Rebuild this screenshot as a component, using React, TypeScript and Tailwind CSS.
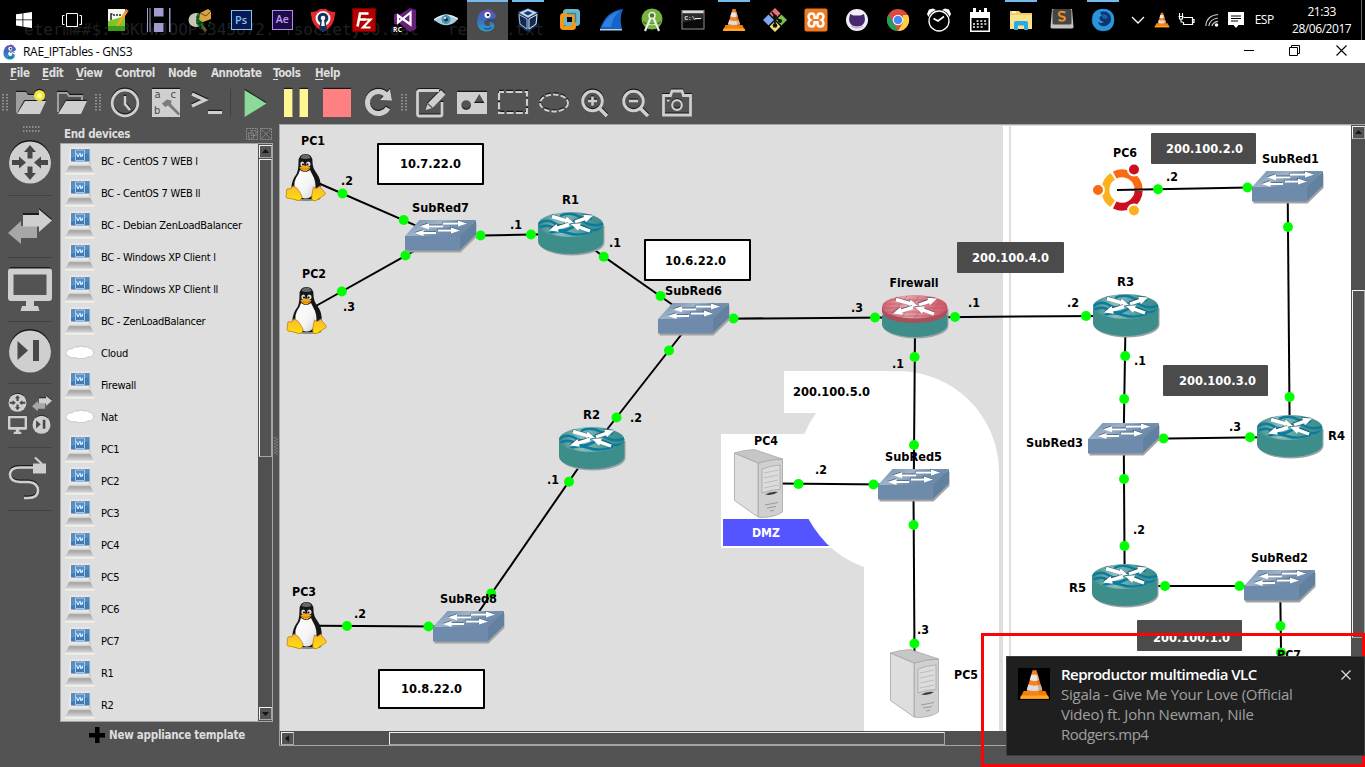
import React from "react";

type P = { children?: React.ReactNode };

const UI = "font-['DejaVu_Sans_Condensed','DejaVu_Sans',sans-serif]";
const SEGOE = "font-['Open_Sans','Noto_Sans',sans-serif]";

/* ---------- Taskbar ---------- */

function Ico({ children, vb = "0 0 24 24", s = 24 }: P & { vb?: string; s?: number }) {
  return (
    <svg width={s} height={s} viewBox={vb} className="block shrink-0">
      {children}
    </svg>
  );
}

function Cone() {
  return (
    <>
      <path d="M3.500 17h17l2.500 6H1z" fill="#f57c00" />
      <path d="M1.500 20.500h21l.8 2.500H.8z" fill="#ffa726" />
      <path d="M10.500 1h3l5 17.500q-6.500 3-13 0z" fill="#f58220" />
      <path d="M9.500 4.500h5l1.200 4q-3.700 1.600-7.400 0z" fill="#e8e8e8" />
      <path d="M7.200 12q4.800 1.800 9.600 0l1.200 4q-6 2.200-12 0z" fill="#dcdcdc" />
      <path d="M13 1l.8 0 4.700 17-3 1.200z" fill="#c45500" opacity=".35" />
    </>
  );
}

function Gecko({ id }: { id: string }) {
  return (
    <>
      <defs>
        <linearGradient id={id} x1="0" y1="0" x2="0" y2="1">
          <stop offset="0" stopColor="#6b4bb0" />
          <stop offset=".45" stopColor="#3f68c0" />
          <stop offset="1" stopColor="#2aa3c4" />
        </linearGradient>
      </defs>
      <path
        d="M3 9Q5 2 11 2l2.500-1.500L15 2l2-.5.3 2Q21 5 21 9q-2 2.500-6 2.200-4.500-.2-5.500 2Q8.500 16 11 17.500q2.500 1 4-.5.500-1.500-1-2 2-1.800 4 0 2.500 2.500.5 5.500-2.500 3-7 3Q4 23 2.500 17q-.5-2 0-3.500Q1.500 12 3 9z"
        fill={`url(#${id})`}
      />
      <path d="M12 13q3-2.500 7-.5M9 20q4 2.500 7.500-.5" fill="none" stroke="#1c4d96" strokeWidth="1.200" />
      <circle cx="12.500" cy="7" r="3" fill="#fff" />
      <circle cx="13" cy="7" r="1.300" fill="#223" />
    </>
  );
}

const apps: { icon: React.ReactNode; cls?: string; bar?: string }[] = [
  {
    icon: (
      <Ico>
        <rect x="2" y="1" width="17" height="22" fill="#f4f8ee" />
        <path d="M2 13l17-5v15H2z" fill="#7bc62d" />
        <path d="M2 18h17v5H2z" fill="#3f9a1c" />
        <path d="M5 12V6h1.500M8 6v2M11 6v2M14 6v2" stroke="#223" strokeWidth="1.500" fill="none" />
        <path d="M20 1l2.500 1.800L13.500 17l-2.500 1.500.3-3z" fill="#f5a623" />
        <path d="M19 3l2.300 1.600L22.500 2.800 20.200 1z" fill="#d66" />
      </Ico>
    ),
  },
  {
    icon: (
      <Ico>
        <path d="M0 0h1v24H0zM22 0h1.500v24H22zM2.500 0h1v24h-1z" fill="#a09cce" />
        <path d="M7 0h9.500v8.500H7zM7 15h9.500v9H7z" fill="#a09cce" />
      </Ico>
    ),
  },
  {
    icon: (
      <Ico>
        <ellipse cx="8" cy="12" rx="7.500" ry="7" fill="#c9c5b8" />
        <path d="M9 6h6v12h-5q-3-3-1-12z" fill="#087a24" />
        <path d="M8 9h7M8 12h7M8 15h7M12 6v12" stroke="#03280d" strokeWidth=".8" />
        <path d="M12 5l8-4 3 2v8l-8 3-4-2z" fill="#d9a441" />
        <path d="M12 5l6 3 5-5" stroke="#6f4708" fill="none" />
        <path d="M14 18l4 5" stroke="#655a36" strokeWidth="3" />
        <path d="M21 15l2-1M20 18h2" stroke="#087a24" />
      </Ico>
    ),
  },
  {
    icon: (
      <div className="flex h-5 w-[21px] items-center justify-center border border-[#86c5f5] bg-[#071a52] font-['Open_Sans',sans-serif] text-[11px] font-semibold text-[#86c5f5]">
        Ps
      </div>
    ),
  },
  {
    icon: (
      <div className="flex h-5 w-[21px] items-center justify-center border border-[#b18cf0] bg-[#1d0b44] font-['Open_Sans',sans-serif] text-[10.500px] font-semibold text-[#c49bfa]">
        Ae
      </div>
    ),
  },
  {
    icon: (
      <Ico>
        <path d="M0 4q6 0 9-3h6q3 3 9 3 .5 14-12 20Q-.5 18 0 4z" fill="#e8272c" />
        <circle cx="12" cy="10.500" r="7.500" fill="#f3f3f3" />
        <circle cx="12" cy="10" r="5.300" fill="#12315f" />
        <circle cx="12" cy="10" r="2.300" fill="#f3f3f3" />
        <path d="M9.500 13l5 0 1.500 9-4 2-4-2z" fill="#12315f" />
        <path d="M11 11h2l.8 7h-3.600z" fill="#f3f3f3" />
      </Ico>
    ),
  },
  {
    icon: (
      <Ico>
        <rect x=".5" y=".5" width="23" height="23" fill="#b40000" stroke="#7d0000" strokeDasharray="1.500 1" />
        <path d="M5.500 18.500L8 5.500h8.500M7 11.500h6.500" fill="none" stroke="#fff" strokeWidth="2.600" />
        <path d="M11.500 11.500h7l-7.500 8h7.500" fill="none" stroke="#fff" strokeWidth="2.200" />
      </Ico>
    ),
  },
  {
    icon: (
      <Ico>
        <path d="M17 0l6 2v19l-6 3L6 15l-3 1.500-2-1V6.500l2-1L6 7z" fill="#68217a" />
        <path d="M17.500 4.500L5 14.500v-7l12.500 9z" fill="none" stroke="#fff" strokeWidth="2.200" />
        <text x="0" y="23.500" fontSize="6.500" fontWeight="700" fill="#fff" fontFamily="Open Sans" textLength="9">
          RC
        </text>
      </Ico>
    ),
  },
  {
    icon: (
      <Ico>
        <path d="M0 12Q12 1.500 24 11q-10 12-24 1z" fill="#a9cbdb" />
        <path d="M0 12Q12 3 24 11" fill="none" stroke="#dceef6" strokeWidth="1.500" />
        <circle cx="12" cy="11.500" r="4.500" fill="#4b93b5" />
        <circle cx="12" cy="11.500" r="1.900" fill="#12364a" />
        <circle cx="11" cy="10" r="1.100" fill="#fff" />
      </Ico>
    ),
  },
  { icon: <Ico><Gecko id="gk1" /></Ico>, cls: "bg-[#4c4c4c]", bar: "w-full" },
  {
    icon: (
      <Ico>
        <path d="M12 0l10 4-1 14-9 6-9-6L2 4z" fill="#1b3a6b" />
        <path d="M12 .8l9 4-9 5-9-5z" fill="#c6d5ea" />
        <path d="M12 3l4.500 2L12 7.500 7.500 5z" fill="#1b3a6b" />
        <path d="M3 6.500l8 4.500v10l-7-5z" fill="#14294d" stroke="#a9bedb" />
        <path d="M21 6.500L13 11v10l7-5z" fill="#14294d" stroke="#dfe9f5" />
      </Ico>
    ),
    bar: "w-8",
  },
  {
    icon: (
      <Ico>
        <rect x="7" y="3" width="13" height="13" rx="1.500" fill="none" stroke="#6ab8cc" strokeWidth="4" />
        <rect x="4" y="7" width="12" height="13" rx="1.500" fill="none" stroke="#f3961c" strokeWidth="4" />
        <path d="M9 5.500h8.500v9" fill="none" stroke="#2f8aa8" strokeWidth="1.500" />
      </Ico>
    ),
  },
  {
    icon: (
      <Ico>
        <path d="M1 21Q7 3 24 1q-4 9-1 20z" fill="#1463c8" />
        <path d="M3 19Q9 5 22 2.500 14 7 12 19z" fill="#3f8be8" opacity=".7" />
        <path d="M1 21h22v1.500H1z" fill="#b9cbe0" />
      </Ico>
    ),
  },
  {
    icon: (
      <Ico>
        <circle cx="12" cy="11" r="10.500" fill="#78b240" />
        <path d="M3 14q9 5 18 0" stroke="#4d7c24" strokeWidth="1.500" fill="none" />
        <path d="M10.500 10L5 23M13.500 10L19 23" stroke="#e9efe4" strokeWidth="2.200" />
        <circle cx="12" cy="7.500" r="3" fill="#4d7c24" stroke="#e9efe4" strokeWidth="1.500" />
        <path d="M8 16q4 2 8 0" stroke="#e9efe4" fill="none" />
      </Ico>
    ),
  },
  {
    icon: (
      <Ico>
        <rect x="1" y="2.500" width="22" height="18.500" fill="#0a0a0a" stroke="#8f8f8f" />
        <path d="M1.500 3h21v2.500h-21z" fill="#dcdcdc" />
        <path d="M2 5.500h20V11L2 14z" fill="#2c2c2c" />
        <text x="3.500" y="11.500" fontSize="6" fontWeight="700" fill="#eee" fontFamily="Liberation Mono">
          C:\
        </text>
        <path d="M14 10.500h6" stroke="#eee" />
      </Ico>
    ),
  },
  { icon: <Ico><Cone /></Ico>, bar: "w-8" },
  {
    icon: (
      <Ico>
        <path d="M12 0l5.500 5.500L12 11 6.500 5.500z" fill="#e87272" />
        <path d="M5.500 6.500L11 12l-5.500 5.500L0 12z" fill="#7aa9f0" />
        <path d="M18.500 6.500L24 12l-5.500 5.500L13 12z" fill="#7fc04a" />
        <path d="M12 13l5.500 5.500L12 24l-5.500-5.500z" fill="#f3df78" />
        <path d="M9 4l3 4v10M12 9l5 4" stroke="#111" strokeWidth="1.700" fill="none" />
        <circle cx="12" cy="17.500" r="2.300" fill="#111" />
        <circle cx="17" cy="13" r="2" fill="#111" />
        <circle cx="12" cy="8.500" r="2" fill="#111" />
      </Ico>
    ),
  },
  {
    icon: (
      <Ico>
        <rect x=".5" y=".5" width="23" height="23" rx="2" fill="#ee7a22" />
        <path
          d="M8 5.500q-3.500 0-3.500 3.300 0 2 2 3.200-2 1.200-2 3.200Q4.500 18.500 8 18.500q2.500 0 2.500-3.300v-1h3v1q0 3.300 2.500 3.300 3.500 0 3.500-3.300 0-2-2-3.200 2-1.200 2-3.200 0-3.300-3.500-3.300-2.500 0-2.500 3.300v1h-3v-1q0-3.300-2.500-3.300z"
          fill="none"
          stroke="#fff"
          strokeWidth="2.400"
        />
      </Ico>
    ),
  },
  {
    icon: (
      <Ico>
        <circle cx="12" cy="12" r="11" fill="#f1eef7" />
        <path d="M5 6l3.500 1.500h7L19 6q1.500 5 .5 8-2 4.500-7.500 4.500T4.500 14Q3.500 11 5 6z" fill="#46296f" />
        <path d="M6 18q6 4 12 0" stroke="#b9aecf" fill="none" strokeWidth="1.500" />
      </Ico>
    ),
  },
  {
    icon: (
      <Ico>
        <circle cx="12" cy="12" r="11" fill="#dd4b3e" />
        <path d="M2.500 6.500L8 16l4 7A11 11 0 0 1 2.500 6.500z" fill="#1da05c" />
        <path d="M12 23l5-8.500V7h5a11 11 0 0 1-10 16z" fill="#fecf41" />
        <circle cx="12" cy="12" r="5.300" fill="#fff" />
        <circle cx="12" cy="12" r="4.300" fill="#4a8af4" />
      </Ico>
    ),
  },
  {
    icon: (
      <Ico>
        <path d="M0 6l2-4.500 4-1L9 2Q3 4 1.500 9zM24 6l-2-4.500-4-1L15 2q6 2 7.500 7z" fill="#fff" />
        <circle cx="12" cy="13" r="10" fill="none" stroke="#fff" strokeWidth="1.300" />
        <path d="M6.500 10.500L11 13l6-4.500" fill="none" stroke="#fff" strokeWidth="1.700" />
      </Ico>
    ),
  },
  {
    icon: (
      <Ico>
        <path d="M2 4h3V0h3v4h3V2h2v2h3V0h3v4h3v20H2z" fill="#fff" />
        <path d="M3.500 10h17V22.500h-17z" fill="#000" />
        <path d="M8.500 13h10.500M5 16h14M5 19h10" stroke="#fff" strokeWidth="1.600" strokeDasharray="2 1.800" />
      </Ico>
    ),
  },
  {
    icon: (
      <Ico>
        <path d="M1 3h9l2 2h11v16H1z" fill="#f2cf63" />
        <path d="M1 7h22v14H1z" fill="#fbe38c" />
        <path d="M5 22v-7q0-2 2-2h10q2 0 2 2v7h-4v-4.500H9V22z" fill="#29a9e5" />
        <path d="M3 3.500h4v1.500H3z" fill="#fff" />
      </Ico>
    ),
    bar: "w-8",
  },
  {
    icon: (
      <Ico>
        <path d="M2 1h20l1.500 18q0 1.500-2 1.500h-19Q.5 20.500.500 19z" fill="#c4c4c4" />
        <rect x="2.500" y="1" width="19" height="15.500" rx="1.500" fill="#454545" />
        <path d="M15.500 4.500Q9 2.500 9 6q0 2 3 2.500t3 2q-.5 3.500-6.500 1.500" stroke="#ef8f30" strokeWidth="2" fill="none" />
      </Ico>
    ),
  },
  {
    icon: (
      <Ico>
        <circle cx="12" cy="12" r="11.200" fill="#1572b8" />
        <path d="M2 6q4-5 10-5 9 0 11 8 1 9-5 13Q5 25 1.500 15z" fill="#2c94d8" />
        <path d="M9 4q8-2 10.500 4t-4.500 10q-7 1-8-4 3 2 6 0-4-1-4.500-3.500t2.500-2.500q-1-2-2-4z" fill="#0b3570" />
        <path d="M12 6q4 0 5 4l-3 1q-2 0-3-2z" fill="#1b5fa8" />
      </Ico>
    ),
    bar: "w-8",
  },
];

function Taskbar() {
  return (
    <div className="relative flex h-10 shrink-0 items-stretch bg-black">
      <div className="absolute left-6 top-[20px] whitespace-pre font-['DejaVu_Sans_Mono',monospace] text-[16px] leading-[20px] text-[#1d2024]">
        {"eterm##$: BKUWJOOPS345672. fsociety00.dat   readme.txt"}
      </div>
      <div className="relative flex w-12 items-center justify-center">
        <svg width="16" height="16" viewBox="0 0 16 16">
          <path d="M0 2.300L6.500 1.400v6.100H0zM7.300 1.300L16 0v7.500H7.300zM0 8.300h6.500v6.200L0 13.600zM7.300 8.300H16V16l-8.700-1.300z" fill="#fff" />
        </svg>
      </div>
      <div className="relative flex w-[49.5px] items-center pl-[14px]">
        <svg width="20" height="14" viewBox="0 0 20 14" fill="none" stroke="#fff">
          <path d="M4.500.5h11v13h-11zM2.500 2.500h-2v9h2M17.500 2.500h2v9h-2" />
        </svg>
      </div>
      {apps.map((a, i) => (
        <div key={i} className={`relative flex w-[41.06px] shrink-0 items-center justify-center ${a.cls ?? ""}`}>
          {a.bar && <div className={`absolute top-0 h-0.5 bg-[#76b9ed] ${a.bar}`} />}
          {a.icon}
        </div>
      ))}
      <div className="flex flex-1 items-center pl-[7px]">
        <svg width="14" height="8" viewBox="0 0 14 8" className="shrink-0">
          <path d="M1 1l6 6 6-6" fill="none" stroke="#fff" strokeWidth="1.300" />
        </svg>
        <div className="ml-[9px]">
          <Ico s={16}><Cone /></Ico>
        </div>
        <svg width="17" height="14" viewBox="0 0 17 14" className="ml-2 shrink-0">
          <path d="M5.500 4.500h9v7h-9V9M14.500 6.500h1.500v3h-1.500" fill="none" stroke="#fff" strokeWidth="1.200" />
          <path d="M1.500 0v3M4.500 0v3M.5 3.500h5M1.500 3.500v2.500h3V3.500M3 6v3h2" fill="none" stroke="#fff" strokeWidth="1.100" />
        </svg>
        <svg width="14" height="14" viewBox="0 0 14 14" className="ml-[10px] shrink-0">
          <g fill="none" stroke="#c9c9c9" strokeWidth="1.200">
            <path d="M.8 13Q1.500 2.500 13 1.500M3.800 13Q5 6 13 5M6.800 13Q8 9 13 8.300" />
          </g>
          <circle cx="11.500" cy="12" r="1.800" fill="#fff" />
        </svg>
        <svg width="16" height="16" viewBox="0 0 16 16" className="ml-[9px] shrink-0">
          <path d="M0 0h16v13h-5.500L8 16l-2.500-3H0z" fill="#fff" />
          <path d="M3 4h10M3 6.500h10M3 9h7" stroke="#000" />
        </svg>
        <span className={`ml-[11px] text-[12px] tracking-[-0.5px] text-white ${SEGOE}`}>ESP</span>
        <div className={`ml-[17px] flex w-[62px] flex-col items-center pb-px text-[12px] leading-[17px] tracking-[-0.45px] text-white ${SEGOE}`}>
          <span>21:33</span>
          <span>28/06/2017</span>
        </div>
      </div>
      <div className="absolute right-[3px] top-0 h-full w-px bg-[#666]" />
    </div>
  );
}

/* ---------- Window chrome ---------- */

function TitleBar() {
  return (
    <div className="flex h-[23px] shrink-0 items-center bg-white pl-[2px]">
      <Ico s={16}><Gecko id="gk2" /></Ico>
      <span className={`ml-[5px] flex-1 text-[12px] tracking-[-0.3px] text-black ${SEGOE}`}>RAE_IPTables - GNS3</span>
      <div className="flex items-center pb-[3px] pr-[18px]">
        <svg width="10" height="10" viewBox="0 0 10 10"><path d="M0 5.500h10" stroke="#000" /></svg>
        <svg width="11" height="11" viewBox="0 0 11 11" className="ml-[35px]" fill="none" stroke="#000">
          <path d="M.5 2.500h8v8h-8zM2.500 2.500v-2h8v8h-2" />
        </svg>
        <svg width="11" height="11" viewBox="0 0 11 11" className="ml-[36px]"><path d="M.5.5l10 10M10.500.5l-10 10" stroke="#000" strokeWidth="1.100" /></svg>
      </div>
    </div>
  );
}

const menus = [
  { t: "File", u: true, w: "w-8" },
  { t: "Edit", u: true, w: "w-[34px]" },
  { t: "View", u: true, w: "w-[39px]" },
  { t: "Control", u: false, w: "w-[53px]" },
  { t: "Node", u: false, w: "w-[43px]" },
  { t: "Annotate", u: false, w: "w-[62px]" },
  { t: "Tools", u: true, w: "w-[42px]" },
  { t: "Help", u: true, w: "w-10" },
];

function MenuBar() {
  return (
    <div className={`flex h-[20px] shrink-0 items-center pl-[10px] pt-[2px] text-[11.500px] font-bold tracking-[-0.4px] text-[#dedede] ${UI}`}>
      {menus.map((m) => (
        <span key={m.t} className={`whitespace-nowrap ${m.w}`}>
          {m.u ? <><span className="underline underline-offset-2">{m.t[0]}</span>{m.t.slice(1)}</> : m.t}
        </span>
      ))}
    </div>
  );
}

function Handle({ w }: { w: string }) {
  return (
    <div className={`flex shrink-0 justify-center ${w}`}>
      <svg width="6" height="18" viewBox="0 0 6 18">
        <path d="M1 0v18M5 0v18" stroke="#a2a2a2" strokeWidth="1.600" strokeDasharray="1.500 1.500" />
      </svg>
    </div>
  );
}

function Tool({ children }: P) {
  return (
    <div className="flex w-[41px] shrink-0 items-center justify-center">
      <svg width="32" height="32" viewBox="0 0 32 32">
        <g transform="translate(0 -1.200)" className="opacity-70 brightness-0">{children}</g>
        {children}
      </svg>
    </div>
  );
}

const G = "#cfcfcf";

function ToolBar() {
  return (
    <div className="flex h-[41px] shrink-0 items-center pb-[1px]">
      <Handle w="w-[10px]" />
      <Tool>
        <path d="M1 5h10l2 3h13v5H9L2 26H1z" fill="#9f9f9f" />
        <path d="M10 14h21l-6 13H2z" fill={G} />
        <circle cx="24.500" cy="8.500" r="5.500" fill="#f2e53c" />
        <circle cx="24.500" cy="8.500" r="2.500" fill="#fffca0" />
      </Tool>
      <Tool>
        <path d="M2 25V6h9l2 3h13v4" fill="none" stroke="#9f9f9f" strokeWidth="2.200" />
        <path d="M10 14h21l-6 13H2z" fill={G} />
      </Tool>
      <Handle w="w-[12px]" />
      <Tool>
        <circle cx="16" cy="16" r="12.800" fill="none" stroke={G} strokeWidth="2.800" />
        <path d="M16 9v8l5 6" fill="none" stroke={G} strokeWidth="2.600" />
      </Tool>
      <Tool>
        <path d="M2 2h28v28H2z" fill={G} />
        <g fontFamily="DejaVu Sans" fontSize="10" fill="#4c4c4c">
          <text x="4.500" y="11">a</text>
          <text x="20.500" y="11">c</text>
          <text x="4" y="27">b</text>
        </g>
        <path d="M12 16.500l5-4 4.500 1-.5 3.500 9 9.500-1.500 2L18 18.500l-3 1.500z" fill="#7b7b7b" />
      </Tool>
      <Tool>
        <path d="M1 7l13 6L1 19" fill="none" stroke={G} strokeWidth="3.200" />
        <path d="M17 25.500h14" stroke={G} strokeWidth="3" />
      </Tool>
      <div className="flex w-[7px] shrink-0 justify-center"><div className="h-7 w-px bg-[#3f3f3f]" /></div>
      <Tool><path d="M5.500 3l22 13.500L5.500 30z" fill="#8bda9a" /></Tool>
      <Tool><path d="M4 2h8.500v28H4zM19.500 2H28v28h-8.500z" fill="#fff794" /></Tool>
      <Tool><path d="M2 2h28v28H2z" fill="#ff8080" /></Tool>
      <Tool>
        <path d="M24.500 8A11 11 0 1 0 26 21" fill="none" stroke={G} strokeWidth="5" />
        <path d="M28 2l2 11.500-12-.5z" fill={G} />
      </Tool>
      <Handle w="w-3" />
      <Tool>
        <path d="M24 3.500H4.500q-2 0-2 2V27q0 2 2 2H25q2 0 2-2V15" fill="none" stroke={G} strokeWidth="2.800" />
        <path d="M26 3l4.500 4.500-13 13.500-7 2 2-6.500z" fill={G} />
        <path d="M12.500 16.500l5 4.500" stroke="#535353" strokeWidth="1.200" />
      </Tool>
      <Tool>
        <path fillRule="evenodd" d="M1 5h30v22H1zM15 18a4.800 4.800 0 1 0-9.600 0 4.800 4.800 0 0 0 9.600 0zM18 16h10.500L23.300 7z" fill={G} />
      </Tool>
      <Tool>
        <path d="M2 5h28v21H2z" fill="none" stroke={G} strokeWidth="2.200" strokeDasharray="7 2.200" strokeDashoffset="2" />
      </Tool>
      <Tool>
        <ellipse cx="16" cy="16" rx="14" ry="8.500" fill="none" stroke={G} strokeWidth="2" strokeDasharray="5.500 2" />
      </Tool>
      <Tool>
        <circle cx="13.500" cy="14" r="9.800" fill="none" stroke={G} strokeWidth="3" />
        <path d="M20.500 21.500l7.500 7.500" stroke={G} strokeWidth="3.600" />
        <path d="M9 14h9M13.500 9.500v9" stroke={G} strokeWidth="2.600" />
      </Tool>
      <Tool>
        <circle cx="13.500" cy="14" r="9.800" fill="none" stroke={G} strokeWidth="3" />
        <path d="M20.500 21.500l7.500 7.500" stroke={G} strokeWidth="3.600" />
        <path d="M9 14h9" stroke={G} strokeWidth="2.600" />
      </Tool>
      <Tool>
        <path d="M2.500 8.500h7L11 4h10l1.500 4.500h7V28h-27z" fill="none" stroke={G} strokeWidth="2.800" />
        <circle cx="16" cy="18" r="4.800" fill="none" stroke={G} strokeWidth="2.200" />
        <path d="M6 12.500h2.500v2H6z" fill={G} />
      </Tool>
    </div>
  );
}

/* ---------- Device rail ---------- */

function RouterGlyph({ s }: { s: number }) {
  return (
    <svg width={s} height={s} viewBox="0 0 44 44">
      <circle cx="22" cy="21" r="21" fill="#161616" />
      <circle cx="22" cy="22.500" r="21" fill={G} />
      <g fill="#484848">
        <path d="M22 5l6 7h-3.500v6.500h-5V12H16z" />
        <path d="M22 40l6-7h-3.500v-6.500h-5V33H16z" />
        <path d="M18 22.500l-7-6v3.500H4v5h7v3.500z" />
        <path d="M26 22.500l7-6v3.500h7v5h-7v3.500z" />
      </g>
    </svg>
  );
}
function SwitchGlyph({ s }: { s: number }) {
  return (
    <svg width={s} height={(s * 36) / 44} viewBox="0 0 44 36">
      <path d="M15 5h16V0l13 11-13 12v-6H15z" fill="#1c1c1c" />
      <path d="M0 25l13-12v5h16v12H13v6z" fill="#a7a7a7" />
      <path d="M15 7h16V1.500L44 12.500 31 24v-5.500H15z" fill={G} />
    </svg>
  );
}
function MonitorGlyph({ s }: { s: number }) {
  return (
    <svg width={s} height={s} viewBox="0 0 44 44">
      <path d="M2 0h40v4H2z" fill="#1c1c1c" />
      <path fillRule="evenodd" d="M3 1.500h38q3 0 3 3V31q0 3-3 3H26v5h4l1.500 5h-19l1.500-5h4v-5H3q-3 0-3-3V4.500q0-3 3-3zM5.500 7.500V28h33V7.500z" fill={G} />
    </svg>
  );
}
function SkipGlyph({ s }: { s: number }) {
  return (
    <svg width={s} height={s} viewBox="0 0 44 44">
      <circle cx="22" cy="21" r="21" fill="#161616" />
      <circle cx="22" cy="22.500" r="21" fill={G} />
      <path d="M9.500 12v19L20 21.500zM25 11h6v21h-6z" fill="#484848" />
    </svg>
  );
}

function Rail() {
  const sep = <div className="h-px w-11 bg-[#424242]" />;
  return (
    <div className="flex w-[60px] shrink-0 flex-col items-center pt-[2px]">
      <svg width="18" height="6" viewBox="0 0 18 6" className="mb-[8px] ml-1 shrink-0">
        <path d="M0 1h18M0 5h18" stroke="#a2a2a2" strokeWidth="1.600" strokeDasharray="1.500 1.500" />
      </svg>
      <RouterGlyph s={44} />
      <div className="mb-[12px] mt-[11px]">{sep}</div>
      <SwitchGlyph s={44} />
      <div className="mb-[9px] mt-[13px]">{sep}</div>
      <MonitorGlyph s={44} />
      <div className="mb-[7px] mt-[10px]">{sep}</div>
      <SkipGlyph s={44} />
      <div className="mb-[8px] mt-[10px]">{sep}</div>
      <div className="grid h-[43px] w-11 grid-cols-[20px_20px] items-center gap-x-[4px]">
        <RouterGlyph s={19} />
        <SwitchGlyph s={20} />
        <MonitorGlyph s={19} />
        <SkipGlyph s={19} />
      </div>
      <div className="mb-[8px] mt-[12px]">{sep}</div>
      <svg width="40" height="44" viewBox="0 0 40 44" className="-ml-1">
        <path d="M25 11.500H12Q2 11.500 2 18.500T12 26h9q9 1 9 8.500T20 42h-4" fill="none" stroke="#1c1c1c" strokeWidth="2.600" transform="translate(0 -1.200)" />
        <path d="M25 11.500H12Q2 11.500 2 18.500T12 26h9q9 1 9 8.500T20 42h-4" fill="none" stroke={G} strokeWidth="2.600" />
        <path d="M25 7.500h13v10H25z" fill={G} />
        <path d="M27 1.500l7 6.500" stroke={G} strokeWidth="2.200" />
      </svg>
      <div className="mt-[10px]">{sep}</div>
    </div>
  );
}

/* ---------- Appliance dock ---------- */

const devices = [
  "BC - CentOS 7 WEB l", "BC - CentOS 7 WEB ll", "BC - Debian ZenLoadBalancer", "BC - Windows XP Client l",
  "BC - Windows XP Client ll", "BC - ZenLoadBalancer", "Cloud", "Firewall", "Nat",
  "PC1", "PC2", "PC3", "PC4", "PC5", "PC6", "PC7", "R1", "R2",
];

function VmIcon() {
  return (
    <svg width="30" height="30" viewBox="0 0 30 30">
      <defs>
        <linearGradient id="vmbase" x1="0" y1="0" x2="0" y2="1">
          <stop offset="0" stopColor="#a2a2a2" />
          <stop offset=".5" stopColor="#bcbcbc" />
          <stop offset="1" stopColor="#e4e4e4" />
        </linearGradient>
      </defs>
      <path d="M4.500 1.500h20.500l.5 17.500H3.500z" fill="#e9e9e9" />
      <path d="M25 1.500l.8 17-1.500 1H4l1-1h19z" fill="#cdcdcd" />
      <path d="M6 3h18.500v12.500H6z" fill="#3f7cb4" />
      <path d="M6 3h18.500v4L6 12z" fill="#6a9fcd" opacity=".6" />
      <path d="M10.500 4h9v10.500h-9z" fill="none" stroke="#b4d0e6" strokeWidth=".9" />
      <path d="M11.500 7l1.500 4L15 7l1 4 1.500-3v2.500" fill="none" stroke="#e6f2fb" strokeWidth="1" />
      <path d="M4.500 20h20q1 0 1.500 1l3.500 6.500H0L3.500 21q.3-1 1-1z" fill="url(#vmbase)" />
      <path d="M0 27h29.500v1.500H0z" fill="#f3f3f3" />
    </svg>
  );
}

function CloudIcon() {
  return (
    <svg width="30" height="30" viewBox="0 0 30 30">
      <path
        d="M3 18Q-1 15.500 2 13.500 2 10.500 7 11q2-3 6-2 3-2 6 0 4-1 5.500 1.500 4 0 3.500 3 2 2-.5 3.500-.5 2.500-5 2-2 2-6.500 1.500-3 1-5-.8-6 1-8-1.700z"
        fill="#fff"
        stroke="#a9bcc0"
        strokeWidth=".7"
      />
    </svg>
  );
}

const box = "border border-t-[#f2f2f2] border-l-[#f2f2f2] border-b-[#a5a5a5] border-r-[#a5a5a5] bg-[#535353]";

function Arrow({ d }: { d: string }) {
  return (
    <div className={`flex h-[13px] w-[13px] shrink-0 items-center justify-center ${box}`}>
      <svg width="7" height="7" viewBox="0 0 7 7"><path d={d} fill="#151515" /></svg>
    </div>
  );
}

function Dock() {
  return (
    <div className="flex w-[213px] shrink-0 flex-col">
      <div className={`flex h-[19px] shrink-0 items-center pl-1 pr-[1px] text-[11.500px] font-bold text-[#dedede] ${UI}`}>
        <span className="flex-1 pt-[2px] tracking-[-0.3px]">End devices</span>
        <svg width="26" height="12" viewBox="0 0 26 12" fill="none" stroke="#9a9a9a" strokeWidth=".8">
          <path d="M.5.5h11v11H.5zM5 2.500h5v5H5zM2.500 5h5v5h-5zM14.500.5h11v11h-11zM15.500 1.500l9 9M24.500 1.500l-9 9" strokeDasharray="2 .7" />
        </svg>
      </div>
      <div className="flex h-[579px] shrink-0 overflow-hidden border border-[#a5a5a5] bg-[#dedede]">
        <div className="flex-1 pt-[1px]">
          {devices.map((d) => (
            <div key={d} className="flex h-8 items-center pl-1">
              {d === "Cloud" || d === "Nat" ? <CloudIcon /> : <div className="pb-px"><VmIcon /></div>}
              <span className={`ml-[6px] whitespace-nowrap pt-[2px] text-[11px] tracking-[-0.27px] text-black ${UI}`}>{d}</span>
            </div>
          ))}
        </div>
        <div className="flex w-[14px] flex-col bg-[#505050] py-[1px] pl-px">
          <Arrow d="M0 5l3.500-4L7 5z" />
          <div className={`mt-px h-[298px] w-[13px] shrink-0 ${box}`} />
          <div className="flex-1" />
          <Arrow d="M0 2l3.500 4L7 2z" />
        </div>
      </div>
      <div className={`flex h-[26px] items-center justify-center gap-[4px] pl-[1px] text-[11.500px] font-bold text-[#dedede] ${UI}`}>
        <svg width="16" height="16" viewBox="0 0 16 16"><path d="M6 0h4.500v6H16v4.500h-5.500V16H6v-5.500H0V6h6z" fill="#000" /></svg>
        <span className="pt-[2px] tracking-[-0.25px]">New appliance template</span>
      </div>
    </div>
  );
}

/* ---------- Topology ---------- */

type ArrowProps = { x1: number; y1: number; x2: number; y2: number; w: number; h: number; g: number };

function ArrowShape({ x1, y1, x2, y2, w, h, g }: ArrowProps) {
  const dx = x2 - x1, dy = y2 - y1, L = Math.hypot(dx, dy), ux = dx / L, uy = dy / L;
  const bx = x2 - ux * h, by = y2 - uy * h;
  const nx = -uy, ny = ux, f = w / 2;
  const d = `M${x1 + nx * f} ${y1 + ny * f}L${bx + nx * f} ${by + ny * f}L${bx + nx * g} ${by + ny * g}L${x2} ${y2}L${bx - nx * g} ${by - ny * g}L${bx - nx * f} ${by - ny * f}L${x1 - nx * f} ${y1 - ny * f}z`;
  return <><path d={d} fill="#1f3a52" opacity=".6" transform="translate(-.5 -.8)" /><path d={d} fill="#fff" /></>;
}

const RouterArrows = () => (
  <>
    <ArrowShape x1={14} y1={4.5} x2={36} y2={11} w={3.4} h={9} g={4} />
    <ArrowShape x1={37} y1={10} x2={55} y2={3.5} w={3.4} h={9} g={4} />
    <ArrowShape x1={31} y1={12.5} x2={11} y2={18.5} w={3.4} h={9} g={4} />
    <ArrowShape x1={52} y1={19} x2={33} y2={12} w={3.4} h={9} g={4} />
  </>
);

function Router({ x, y }: { x: number; y: number }) {
  return (
    <g transform={`translate(${x} ${y})`}>
      <path d="M1.500 14v17a32.500 12.500 0 0 0 65 0V14z" fill="#9aa3a3" />
      <path d="M0 12.500v17a32.700 12.500 0 0 0 65.400 0v-17z" fill="#3d8d8b" />
      <ellipse cx="32.700" cy="12.500" rx="32.700" ry="12.500" fill="url(#rtop)" />
      <g clipPath="url(#rclip)" fill="none" stroke="#0b7c9e" strokeWidth="2.600">
        <path d="M22 4q10-5 20 1 6 3 12 1M0 12q8-6 16-1t16 0 16 0 22-1" />
        <path d="M-1 17q9-6 17-1t17 0 16 0 18-1M10 22q8-5 20-1t24-1" />
      </g>
      <RouterArrows />
    </g>
  );
}

function Firewall({ x, y }: { x: number; y: number }) {
  return (
    <g transform={`translate(${x} ${y})`}>
      <path d="M1.500 14v17a32.500 12.500 0 0 0 65 0V14z" fill="#9aa3a3" />
      <path d="M0 20v9.500a32.700 12.500 0 0 0 65.400 0V20z" fill="#3d8d8b" />
      <path d="M0 12v4.500a32.700 11.500 0 0 0 65.400 0V12z" fill="#a8505c" />
      <ellipse cx="32.700" cy="11.700" rx="32.700" ry="11.700" fill="url(#ftop)" />
      <g clipPath="url(#rclip)" stroke="#b85564" strokeWidth=".6" fill="none">
        <path d="M0 5h66M0 9h66M0 13h66M0 17h66M0 21h66M26 0L4 24M38 0L18 24M50 0L32 24M62 0L46 24" />
      </g>
      <RouterArrows />
    </g>
  );
}

function Switch({ x, y }: { x: number; y: number }) {
  return (
    <g transform={`translate(${x} ${y})`}>
      <path d="M1.500 17v15.500h54L71.500 17V3z" fill="#a3a3a3" />
      <path d="M14.500 0H71L54.500 16H0z" fill="url(#stop)" />
      <path d="M0 16h54.500v14.500H0z" fill="#6e8bab" />
      <path d="M54.500 16L71 0v14.500l-16.500 16z" fill="#6280a0" />
      <ArrowShape x1={38} y1={6.3} x2={15} y2={6.3} w={1.8} h={9} g={3} />
      <ArrowShape x1={38} y1={3.5} x2={62} y2={3.5} w={1.8} h={9} g={3} />
      <ArrowShape x1={31} y1={13} x2={9.5} y2={13} w={1.8} h={9} g={3} />
      <ArrowShape x1={33} y1={10.5} x2={55} y2={10.5} w={1.8} h={9} g={3} />
    </g>
  );
}

function Tux({ x, y }: { x: number; y: number }) {
  return (
    <g transform={`translate(${x} ${y})`}>
      <ellipse cx="21" cy="44.500" rx="14" ry="2.500" fill="#000" opacity=".4" />
      <path d="M13 8q0-8 7-8t7 8q0 6 4 11 5 7 4 15-2 9-7 11H12q-7-4-6-13 1-7 5-12 2-4 2-12z" fill="#151515" />
      <path d="M15 4q1-3.500 5-3.500T25 4q-5 2-10 0z" fill="#686868" />
      <path d="M14.500 16q5 4 10 0 2 4 4 8 3 8 0 15-4 6-9 5.500T12 39Q6.500 32 10.500 24q3-4 4-8z" fill="url(#belly)" />
      <ellipse cx="16.800" cy="10" rx="2" ry="2.500" fill="#dcdcdc" />
      <ellipse cx="22.800" cy="10" rx="2.300" ry="2.500" fill="#dcdcdc" />
      <circle cx="17.500" cy="10.500" r="1.100" fill="#111" />
      <circle cx="22" cy="10.500" r="1.100" fill="#111" />
      <path d="M14 13.500q5-4 11 0-1 2-5 4-5-1-6-4z" fill="#f7a915" />
      <path d="M14.500 14.500q5 1.800 10-.3" stroke="#b96f00" strokeWidth=".7" fill="none" />
      <path d="M1.500 35l4-.5 2-2.500q4 1 6 5l3 5q0 4.500-4 4.500-4-1.500-11-2.500-2-1-.5-4-.5-3 .5-5z" fill="url(#foot)" stroke="#b87900" strokeWidth=".7" />
      <path d="M28 33q3 3 6-1l4 5q3 2 1 4l-5 3q-4 4-6.500 2.500-2-1-1-6 .5-4 1.500-7.500z" fill="url(#foot)" stroke="#b87900" strokeWidth=".7" />
    </g>
  );
}

function Server({ x, y }: { x: number; y: number }) {
  return (
    <g transform={`translate(${x} ${y})`} stroke="#a6a6a6" strokeWidth=".8" strokeLinejoin="round">
      <path d="M24 14q12-4 24.500-4v53q-7 5-20 5.500L24 68z" fill="#d0d0d0" />
      <path d="M.5 4L24 14v54L.5 51.500z" fill="#dedede" />
      <path d="M.5 4Q10 1 20 .5L48.500 10q-12 0-24.500 4z" fill="#c6c6c6" />
      <path d="M28 20q8-3.300 18-4v24.500q-10 .3-18 3.500z" fill="#dcdcdc" />
      <path d="M30 24l14-3M30 29l14-3M30 34l14-3M30 39l14-3" fill="none" stroke="#b5b5b5" />
      <path d="M31 45.500q6-3.500 13-2.500-5 4-13 2.500z" fill="#3d3d3d" stroke="none" />
      <path d="M31 56l13-2.500M33 59l9-1.500M36 62l4-.7" fill="none" stroke="#8d8d8d" />
    </g>
  );
}

function Ubuntu() {
  return (
    <g transform="translate(1122 190)">
      <g fill="none" strokeWidth="8">
        <path d="M-7.300-15A16.700 16.700 0 0 1 16.700-.8" stroke="#fb6a12" />
        <path d="M16.700.8A16.700 16.700 0 0 1-7.300 15" stroke="#cb0f1d" />
        <path d="M-9.300 13.800A16.700 16.700 0 0 1-9.300-13.800" stroke="#fdb11c" />
      </g>
      <g stroke="#fff" strokeWidth="2">
        <circle cx="-24" cy="0" r="6" fill="#fb6a12" />
        <circle cx="12" cy="-20.500" r="6" fill="#cb0f1d" />
        <circle cx="12" cy="20.500" r="6" fill="#fdb11c" />
      </g>
    </g>
  );
}

const links: [number, number, number, number][] = [
  [318, 183, 420, 227.3], [315, 306.5, 422, 246.5], [470, 235.7, 545, 234.2], [588, 245.5, 680, 310],
  [722, 318.7, 890, 317.4], [690, 323.5, 600, 438.5], [580, 465.5, 477, 614.5], [318, 625.8, 440, 626.5],
  [940, 317.2, 1100, 315.9], [915, 330, 913.8, 480], [778, 483.5, 885, 484.6], [913.5, 490, 914.5, 655],
  [1287.7, 195, 1289.6, 420], [1125.4, 330, 1123.8, 430], [1150, 438.7, 1262, 437.3],
  [1123.8, 445, 1124.6, 570], [1155, 586, 1250, 586], [1280.3, 595, 1281.2, 665],
];

const dots: [number, number][] = [
  [342.5, 193.5], [403.7, 220], [341.8, 291.5], [405.5, 255.5], [480.5, 235.5], [531, 234.5],
  [603.7, 256.7], [660.5, 296], [733.5, 318.5], [875, 317.5], [669, 350.5], [616.5, 417.5],
  [569, 481.7], [491.2, 593.5], [347, 626], [428.5, 626.5], [955, 317], [1086, 316], [914.6, 357],
  [914, 445], [798.5, 484], [873.5, 484.5], [913.6, 525], [914.4, 643.5], [1158, 189.3],
  [1247.5, 187.5], [1288, 227], [1289.6, 397], [1125.2, 356], [1124.2, 399], [1163.5, 438.5],
  [1250, 437.3], [1124, 479], [1124.5, 546], [1165, 586], [1239.5, 586], [1280.5, 626], [1281, 652.5],
];

const labels: [string, number, number, number][] = [
  ["PC1", 301, 145, 24], ["PC2", 302, 278, 24], ["PC3", 292, 596, 24], ["SubRed7", 412, 212, 57], ["R1", 562, 204, 17],
  ["SubRed6", 665, 295, 57], ["R2", 583, 419, 17], ["SubRed8", 440, 603, 57], ["Firewall", 889.5, 287, 49],
  ["SubRed5", 885, 461, 57], ["PC4", 754, 445, 24], ["PC5", 954, 679, 24], ["PC6", 1113, 157, 24],
  ["SubRed1", 1262, 163, 57], ["R3", 1117, 286, 17], ["SubRed3", 1026, 447, 57], ["R4", 1328, 440, 17],
  ["R5", 1069, 592, 17], ["SubRed2", 1251, 562, 57], ["PC7", 1277, 659, 24],
  [".2", 341, 185, 12], [".1", 510, 229, 12], [".1", 609, 247, 12], [".3", 343, 311, 12], [".3", 851, 312, 12],
  [".1", 968, 307, 12], [".2", 1067, 307, 12], [".1", 1134, 365, 12], [".1", 892, 368, 12], [".2", 815, 474, 12],
  [".2", 1166, 181, 12], [".3", 1229, 431, 12], [".2", 630, 422, 12], [".1", 547, 484, 12], [".2", 354, 618, 12],
  [".3", 917, 634, 12], [".2", 1133, 534, 12],
  ["10.7.22.0", 400, 168, 61], ["10.6.22.0", 665, 265, 61], ["10.8.22.0", 401, 693, 61], ["200.100.5.0", 793, 396, 77],
];

const darkLabels: [string, number, number, number, number][] = [
  ["200.100.2.0", 1151, 133, 1166, 153], ["200.100.4.0", 957, 242, 972, 262],
  ["200.100.3.0", 1163, 365, 1179, 385], ["200.100.1.0", 1137, 620, 1153, 642],
];

function Topology() {
  return (
    <svg width="1071" height="606" viewBox="280 125 1071 606" className="block bg-[#dedede]">
      <defs>
        <linearGradient id="rtop"><stop offset="0" stopColor="#3d8d8b" /><stop offset=".35" stopColor="#8cbdbb" /><stop offset=".7" stopColor="#4b9694" /><stop offset="1" stopColor="#3d8d8b" /></linearGradient>
        <linearGradient id="ftop"><stop offset="0" stopColor="#d05f6d" /><stop offset=".35" stopColor="#e5a3a9" /><stop offset="1" stopColor="#cf5464" /></linearGradient>
        <linearGradient id="stop" x1="0" y1="0" x2="1" y2=".5"><stop offset="0" stopColor="#6a88a8" /><stop offset=".45" stopColor="#9fb4ca" /><stop offset=".7" stopColor="#7390b0" /><stop offset="1" stopColor="#6a88a8" /></linearGradient>
        <linearGradient id="belly" x1="0" y1="0" x2="1" y2="1"><stop offset="0" stopColor="#fff" /><stop offset=".6" stopColor="#f4f4f4" /><stop offset="1" stopColor="#cfcfcf" /></linearGradient>
        <linearGradient id="foot" x1="0" y1="0" x2="0" y2="1"><stop offset="0" stopColor="#fbb73a" /><stop offset="1" stopColor="#ffe000" /></linearGradient>
        <clipPath id="rclip"><ellipse cx="32.700" cy="12.200" rx="32.500" ry="11.800" /></clipPath>
      </defs>
      <path d="M1003 126h6v605h-6zM1011 126h340v605h-340z" fill="#fff" />
      <rect x="721" y="434" width="120" height="114" rx="1" fill="#fff" />
      <rect x="723" y="519" width="110" height="27" fill="#5555ff" />
      <circle cx="898" cy="472" r="101" fill="#fff" />
      <path d="M784 371h108v42H784zM864 472h135v259H864z" fill="#fff" />
      <g fill="#fff" stroke="#000" strokeWidth="2" strokeLinejoin="round">
        <rect x="378" y="144" width="105" height="40" />
        <rect x="645" y="240" width="105" height="40" />
        <rect x="379" y="670" width="105" height="38" />
      </g>
      {darkLabels.map(([t, x, y]) => <rect key={t} x={x} y={y} width={t[8] === "4" ? 107 : 105} height="31" rx="1" fill="#4b4b4b" />)}
      <Ubuntu />
      <g stroke="#000" strokeWidth="2">
        {links.map(([a, b, c, d], i) => <line key={i} x1={a} y1={b} x2={c} y2={d} />)}
        <line x1="1117" y1="190" x2="1262" y2="187.300" />
      </g>
      <g fill="#0f0">{dots.map(([x, y], i) => <circle key={i} cx={x} cy={y} r="5" />)}</g>
      <Tux x={285.5} y={154} />
      <Tux x={286.5} y={287} />
      <Tux x={286.5} y={602} />
      <Router x={538} y={212} />
      <Router x={559} y={427} />
      <Router x={1093} y={294} />
      <Router x={1257} y={415} />
      <Router x={1092} y={564} />
      <Firewall x={882} y={295} />
      <Switch x={405} y={220} />
      <Switch x={658} y={303} />
      <Switch x={878} y={469} />
      <Switch x={1252} y={171} />
      <Switch x={1088} y={423} />
      <Switch x={1244} y={570} />
      <Switch x={433} y={611} />
      <Server x={734} y={449} />
      <Server x={890} y={649} />
      <g fontFamily="'DejaVu Sans Condensed','DejaVu Sans',sans-serif" fontWeight="700" fontSize="12.800">
        {labels.map(([t, x, y, w], i) => <text key={i} x={x} y={y} textLength={w} lengthAdjust="spacingAndGlyphs">{t}</text>)}
        <g fill="#fff">
          {darkLabels.map(([t, , , x, y]) => <text key={t} x={x} y={y} textLength="77" lengthAdjust="spacingAndGlyphs">{t}</text>)}
          <text x="752" y="537" textLength="28" lengthAdjust="spacingAndGlyphs">DMZ</text>
        </g>
      </g>
    </svg>
  );
}

function Workspace() {
  return (
    <div className="flex h-[622px] w-[1086px] shrink-0 flex-col border border-r-0 border-[#a5a5a5]">
      <div className="flex h-[606px] shrink-0">
        <Topology />
        <div className="flex w-[14px] flex-col items-center bg-[#505050] pt-[1px]">
          <Arrow d="M0 5l3.500-4L7 5z" />
          <div className={`mt-[151px] h-[348px] w-[13px] shrink-0 ${box}`} />
        </div>
      </div>
      <div className="flex h-[14px] shrink-0 items-center bg-[#505050] pl-px">
        <Arrow d="M5 0L1 3.500 5 7z" />
        <div className={`ml-[95px] h-[13px] w-[556px] ${box}`} />
      </div>
    </div>
  );
}

function Toast() {
  return (
    <div className="absolute left-[981px] top-[633px] h-[134px] w-[384px] border-[3px] border-[#fa0505] pl-[22px] pt-[20px]">
      <div className={`flex h-[100px] w-[359px] border border-[#3d3d3d] bg-[#1f1f1f] pl-[11px] pt-[7px] ${SEGOE}`}>
        <div className="mt-[4px] flex h-8 w-8 shrink-0 items-center justify-center bg-black">
          <Ico s={31}><Cone /></Ico>
        </div>
        <div className="ml-[11px] w-[250px] whitespace-nowrap text-[15px] leading-[20px] text-[#a0a0a0]">
          <div className="font-semibold tracking-[-0.52px] text-white">Reproductor multimedia VLC</div>
          <div className="tracking-[-0.23px]">Sigala - Give Me Your Love (Official</div>
          <div className="tracking-[-0.23px]">Video) ft. John Newman, Nile</div>
          <div className="tracking-[-0.5px]">Rodgers.mp4</div>
        </div>
        <svg width="10" height="10" viewBox="0 0 10 10" className="ml-[30px] mt-[6px]">
          <path d="M.5.5l9 9M9.500.5l-9 9" stroke="#e0e0e0" strokeWidth="1.200" />
        </svg>
      </div>
    </div>
  );
}

export default function App() {
  return (
    <div className="relative flex h-[767px] w-[1365px] flex-col overflow-hidden bg-[#535353]">
      <Taskbar />
      <TitleBar />
      <MenuBar />
      <ToolBar />
      <div className="flex flex-1">
        <Rail />
        <Dock />
        <div className="flex w-[6px] shrink-0 items-center justify-center">
          <svg width="4" height="18" viewBox="0 0 4 18"><path d="M1 0v18M3 1.500v16" stroke="#a2a2a2" strokeDasharray="1.500 1.500" /></svg>
        </div>
        <Workspace />
      </div>
      <Toast />
    </div>
  );
}
